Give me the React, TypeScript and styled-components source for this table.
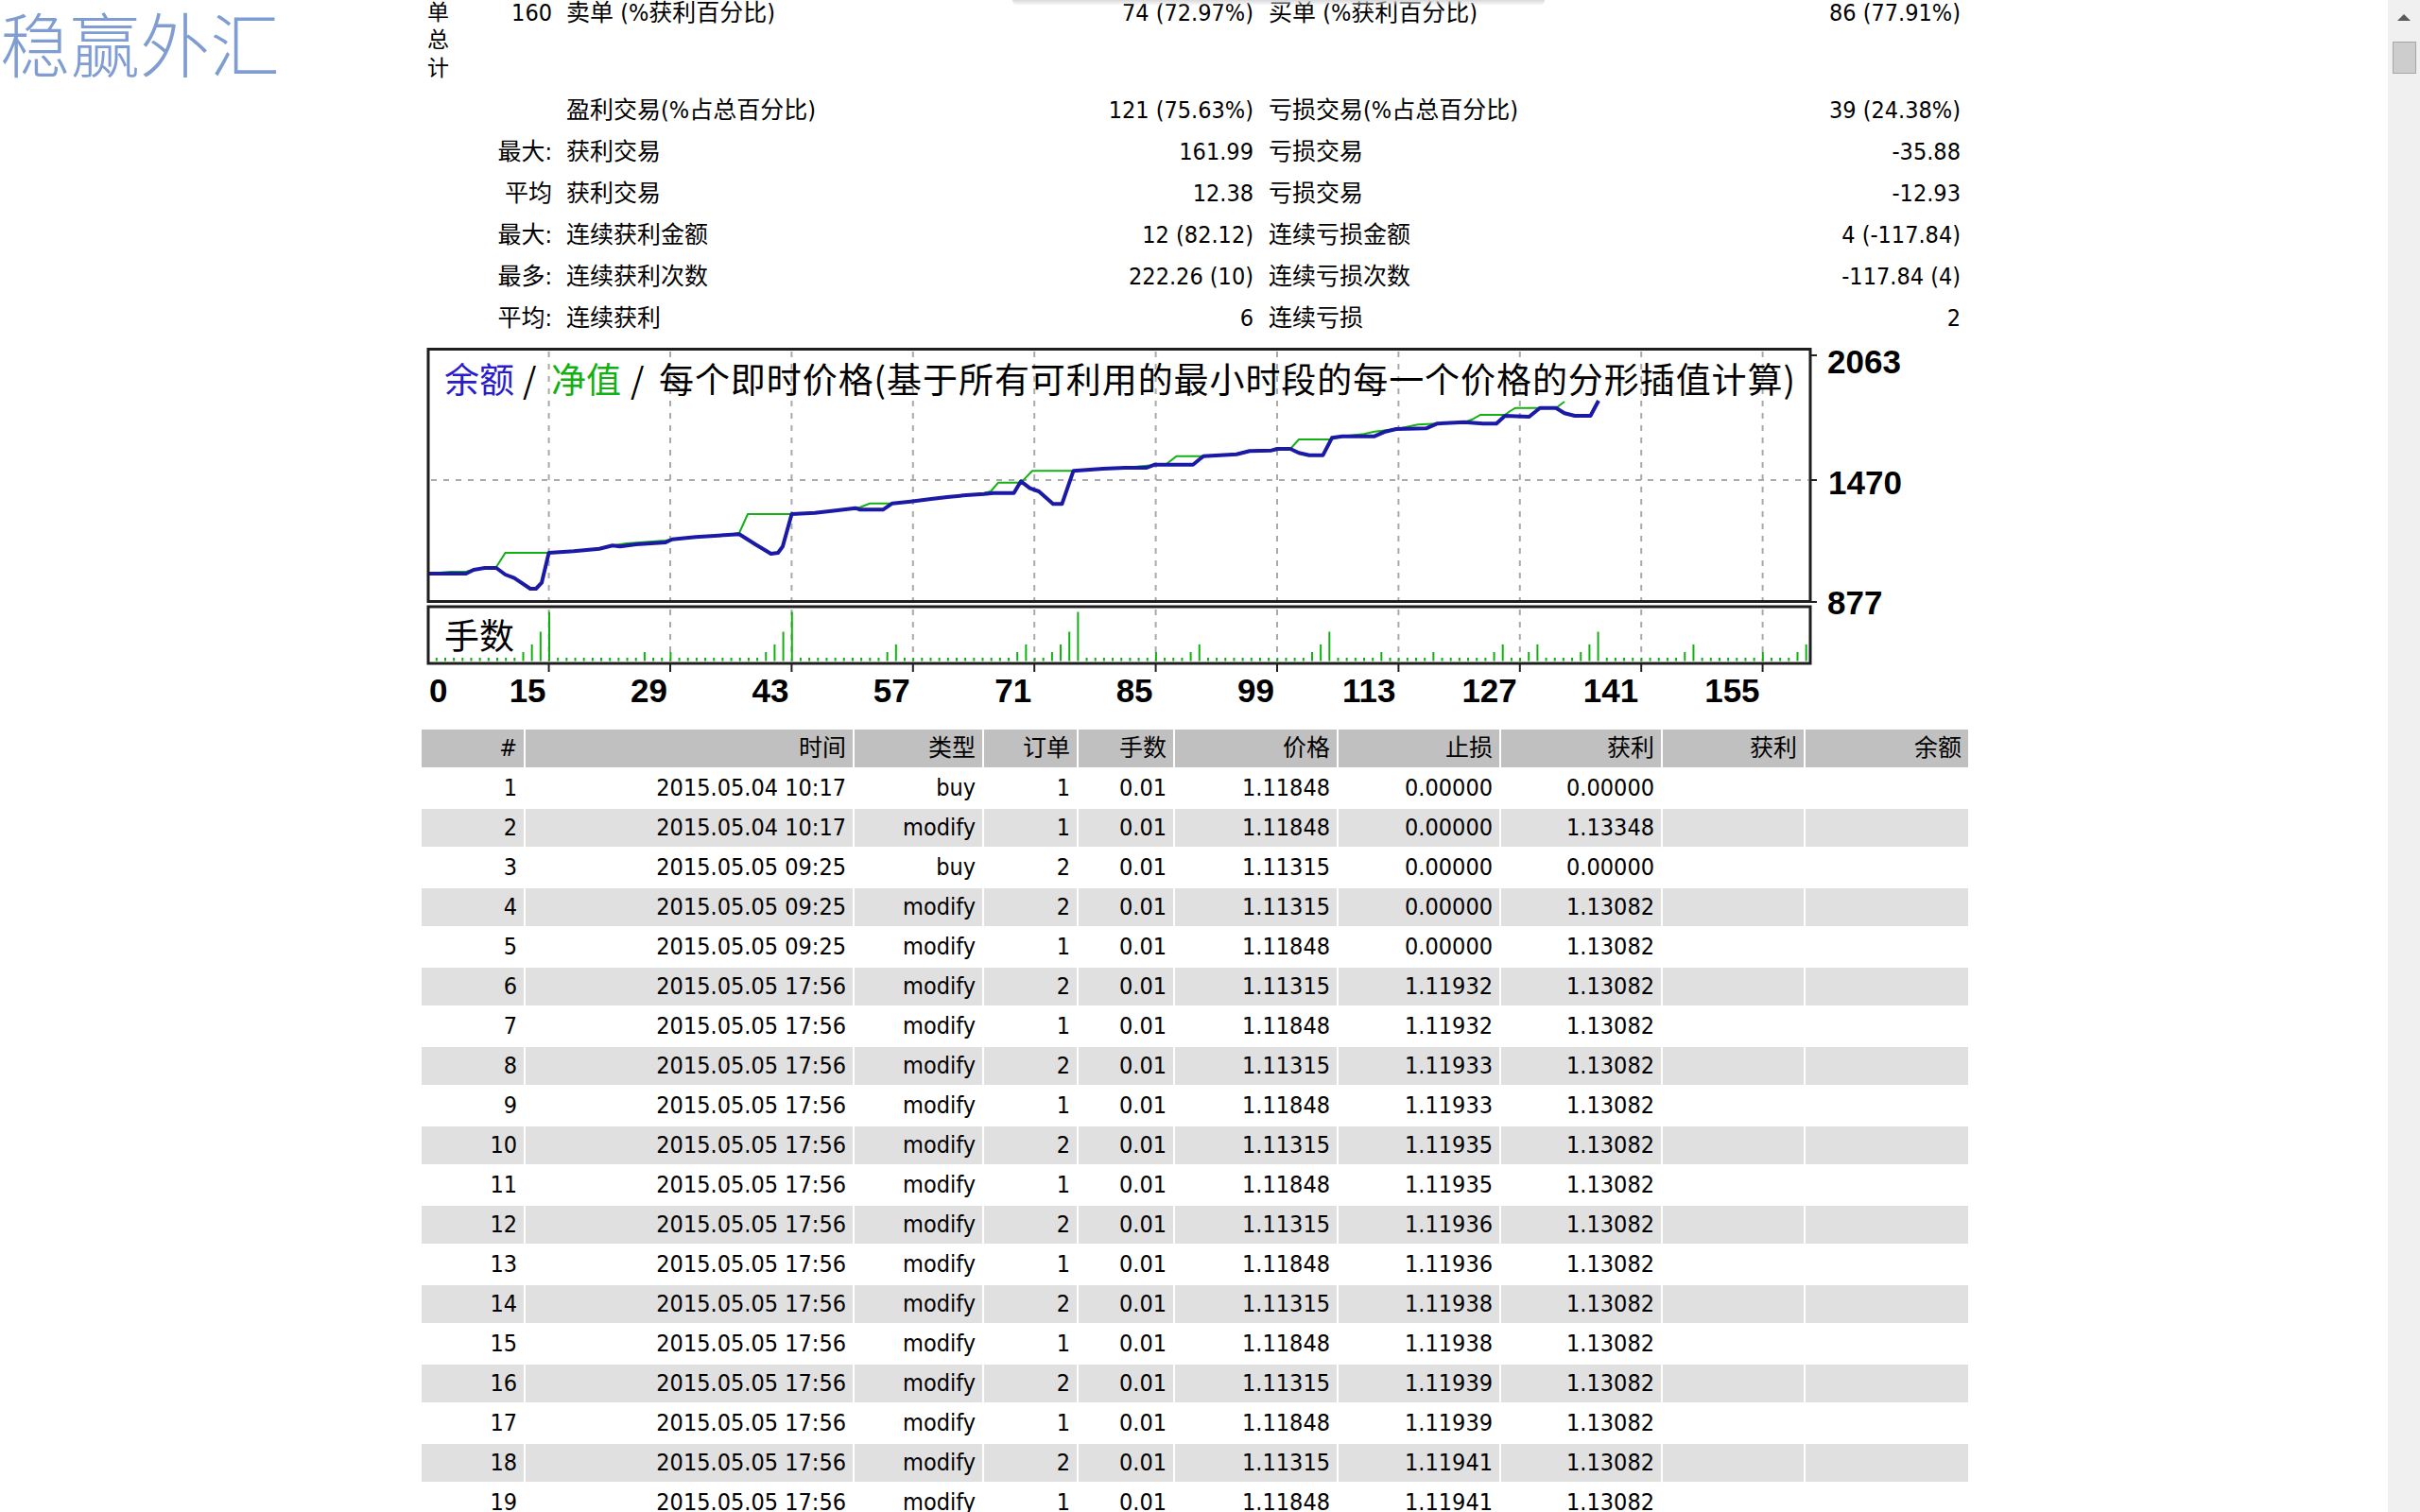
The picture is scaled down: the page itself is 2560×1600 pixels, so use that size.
import React from 'react';
import styled, { createGlobalStyle } from 'styled-components';

const FONT = `"DejaVu Sans Condensed", "Noto Sans CJK SC", sans-serif`;

const GlobalStyle = createGlobalStyle`
  html, body {
    margin: 0;
    padding: 0;
    background: #ffffff;
  }
  body {
    font-family: ${FONT};
    color: #000000;
    overflow: hidden;
  }
`;

const Viewport = styled.div`
  position: relative;
  display: flex;
  height: 100vh;
  overflow: hidden;
`;

const Page = styled.main`
  flex: 1;
  min-width: 0;
  padding-left: 444px;
  overflow: hidden;
`;

const Watermark = styled.div`
  position: absolute;
  left: 0;
  top: 0;
  font-family: "Noto Sans CJK SC", sans-serif;
  font-weight: 300;
  font-size: 74px;
  line-height: 88px;
  color: #7f9dd2;
  white-space: nowrap;
`;

const TopShadow = styled.div`
  position: absolute;
  left: 1071px;
  top: 0;
  width: 563px;
  height: 6px;
  background: linear-gradient(#d9d9d9, rgba(255, 255, 255, 0));
  border-radius: 0 0 6px 6px;
`;

/* ---------- summary block ---------- */

const StatsGrid = styled.div`
  display: grid;
  grid-template-columns: 38px 94px 415px 327px 416px 332px;
  margin: -9px 0 0 8px;
  font-size: 25px;
  line-height: 29px;
`;

const StatCell = styled.div<{ $right?: boolean; $span?: number; $indent?: number }>`
  padding: 7.5px 0 7.5px ${p => p.$indent ?? 0}px;
  text-align: ${p => (p.$right ? 'right' : 'left')};
  white-space: nowrap;
  grid-column: span ${p => p.$span ?? 1};
`;

const StackedCell = styled.div`
  padding: 7.5px 0;
  width: 24px;
  font-size: 23px;
  line-height: 29.5px;
  white-space: normal;
  word-break: break-all;
`;

/* ---------- chart ---------- */

const ChartSvg = styled.svg`
  display: block;
  margin: 1px 0 0 2px;
`;

/* ---------- trades table ---------- */

const TradesTable = styled.table`
  border-collapse: separate;
  border-spacing: 2px;
  table-layout: fixed;
  width: 1640px;
  margin-top: 10px;
  font-size: 25px;
  line-height: 30px;
`;

const HeadCell = styled.th`
  background: #c0c0c0;
  font-weight: normal;
  text-align: right;
  padding: 5px 7px 5px 0;
  white-space: nowrap;
`;

const Row = styled.tr<{ $shaded: boolean }>`
  background: ${p => (p.$shaded ? '#e0e0e0' : 'transparent')};
`;

const Cell = styled.td`
  text-align: right;
  padding: 5px 7px 5px 0;
  white-space: nowrap;
`;

/* ---------- fake scrollbar ---------- */

const ScrollTrack = styled.div`
  flex: none;
  width: 34px;
  background: #f0f0f0;
  display: flex;
  flex-direction: column;
  align-items: center;
`;

const ScrollArrow = styled.div`
  height: 36px;
  width: 100%;
  display: flex;
  align-items: center;
  justify-content: center;

  &::before {
    content: '';
    border-left: 7px solid transparent;
    border-right: 7px solid transparent;
    border-bottom: 7px solid #5a5a5a;
  }
`;

const ScrollThumb = styled.div`
  box-sizing: border-box;
  width: 25px;
  height: 34px;
  margin-top: 8px;
  background: #cdcdcd;
  border: 1px solid #a6a6a6;
`;

type StatRow = [string, string, string, string, string];

const stats: StatRow[] = [
  ['', '盈利交易(%占总百分比)', '121 (75.63%)', '亏损交易(%占总百分比)', '39 (24.38%)'],
  ['最大:', '获利交易', '161.99', '亏损交易', '-35.88'],
  ['平均', '获利交易', '12.38', '亏损交易', '-12.93'],
  ['最大:', '连续获利金额', '12 (82.12)', '连续亏损金额', '4 (-117.84)'],
  ['最多:', '连续获利次数', '222.26 (10)', '连续亏损次数', '-117.84 (4)'],
  ['平均:', '连续获利', '6', '连续亏损', '2'],
];

const columns = [
  { title: '#', width: 108 },
  { title: '时间', width: 346 },
  { title: '类型', width: 135 },
  { title: '订单', width: 98 },
  { title: '手数', width: 100 },
  { title: '价格', width: 171 },
  { title: '止损', width: 170 },
  { title: '获利', width: 169 },
  { title: '获利', width: 149 },
  { title: '余额', width: 172 },
];

const trades: string[][] = [
  ['1', '2015.05.04 10:17', 'buy', '1', '0.01', '1.11848', '0.00000', '0.00000'],
  ['2', '2015.05.04 10:17', 'modify', '1', '0.01', '1.11848', '0.00000', '1.13348'],
  ['3', '2015.05.05 09:25', 'buy', '2', '0.01', '1.11315', '0.00000', '0.00000'],
  ['4', '2015.05.05 09:25', 'modify', '2', '0.01', '1.11315', '0.00000', '1.13082'],
  ['5', '2015.05.05 09:25', 'modify', '1', '0.01', '1.11848', '0.00000', '1.13082'],
];

const stops = ['1.11932', '1.11932', '1.11933', '1.11933', '1.11935', '1.11935', '1.11936', '1.11936',
  '1.11938', '1.11938', '1.11939', '1.11939', '1.11941', '1.11941'];
stops.forEach((sl, i) => {
  const even = i % 2 === 0;
  trades.push([
    String(i + 6),
    '2015.05.05 17:56',
    'modify',
    even ? '2' : '1',
    '0.01',
    even ? '1.11315' : '1.11848',
    sl,
    '1.13082',
  ]);
});

// chart geometry, in page pixels
const BOX_LEFT = 453;
const BOX_RIGHT = 1915;
const TICKS = [15, 29, 43, 57, 71, 85, 99, 113, 127, 141, 155].map((label, k) => ({
  label,
  x: 580.6 + k * 128.4,
}));

const balance = [
  [454, 607], [493, 607], [501, 603], [513, 601], [525, 601], [534.5, 608], [544, 611.7],
  [561, 623], [567, 623], [573, 616.7], [580.6, 585], [607, 583.3], [634, 580.7], [648, 577.3],
  [656, 578.3], [673, 576], [704, 574], [711, 570.7], [736, 568.3], [770, 566], [782, 565.3],
  [799, 576], [815.6, 586], [823, 585], [828, 578.3], [837.5, 544], [862, 542.7], [886, 540],
  [905, 537.7], [910, 539.3], [934, 539.3], [944, 532.7], [963.5, 530.7], [983, 528.3],
  [1002, 526], [1022, 524], [1041, 522.7], [1051, 521.7], [1072.5, 521.7], [1080, 509.3],
  [1089.5, 516.7], [1099, 520], [1114, 533.3], [1123.4, 533.3], [1135.5, 498.3], [1167, 496],
  [1190, 495], [1213, 495], [1221.6, 491.7], [1262, 491.7], [1273, 482.7], [1308, 480.7],
  [1322, 477.3], [1345, 476.7], [1351, 475], [1365, 475], [1374, 479.3], [1385, 481.7],
  [1399.5, 481.7], [1409, 463.3], [1420, 461.7], [1454, 461.7], [1465.5, 456.7], [1477, 454],
  [1508.6, 453.3], [1520, 448.3], [1549, 446.7], [1569, 448.3], [1583, 448.3], [1592, 440],
  [1617.6, 441], [1629, 431.7], [1646, 431.7], [1655, 437.3], [1666, 440], [1682.5, 440],
  [1691, 424],
];

const equity = [
  [454, 607], [476, 605], [493, 605], [500, 603], [513, 601], [525, 600], [534.5, 585],
  [580.6, 585], [607, 583.3], [634, 580.7], [648, 577.3], [656, 576], [663, 575], [687, 573.3],
  [704, 572], [711, 570.7], [736, 568.3], [770, 566], [782, 564], [791, 544], [837.5, 544],
  [862, 542.7], [886, 540], [905, 537.7], [910, 536.7], [920, 532.7], [944, 532.7],
  [963.5, 530.7], [983, 528.3], [1002, 526], [1022, 524], [1041, 521.7], [1048, 520],
  [1056, 510.7], [1080, 510.7], [1092, 498.3], [1135.5, 498.3], [1167, 496], [1190, 495],
  [1213, 492.7], [1233, 491.7], [1244.5, 482.7], [1273, 482.7], [1308, 480.7], [1322, 477.3],
  [1345, 476.7], [1365, 475], [1374, 465], [1408, 465], [1420, 461.7], [1443, 459.3],
  [1454, 456.7], [1477, 454], [1500, 449.3], [1520, 448.3], [1549, 446.7], [1557, 444],
  [1566, 439], [1592, 439], [1597.5, 435], [1603, 431.7], [1629, 431.7], [1646, 431.7],
  [1655, 425],
];

// lot bars: index -> height above the baseline
const tallBars: Record<number, number> = {
  10: 9.5, 11: 17.6, 12: 31, 13: 52, 24: 9.5, 27: 9.5, 38: 9.5, 39: 17.6, 40: 31, 41: 52,
  52: 9.5, 53: 17.6, 67: 9.5, 68: 17.6, 71: 9.5, 72: 17.6, 73: 31, 74: 52, 83: 9.5, 87: 9.5,
  88: 17.6, 101: 9.5, 102: 17.6, 103: 31, 109: 9.5, 115: 9.5, 122: 9.5, 123: 17.6, 126: 9.5,
  127: 17.6, 132: 9.5, 133: 17.6, 134: 31, 144: 9.5, 145: 17.6, 153: 9.5, 157: 9.5, 158: 17.6,
};
const bars = Array.from({ length: 159 }, (_, k) => ({
  x: 461.8 + k * 9.17,
  h: tallBars[k] ?? 3.5,
}));

const toPoints = (pts: number[][]) => pts.map(([x, y]) => `${x},${y}`).join(' ');

const BalanceChart: React.FC = () => (
  <ChartSvg width={1600} height={400} viewBox="446 360 1600 400">
    {/* grid */}
    <g stroke="#a9a9a9" strokeWidth={2} strokeDasharray="6 7">
      {TICKS.map(t => (
        <line key={t.label} x1={t.x} y1={372} x2={t.x} y2={700} />
      ))}
      <line x1={456} y1={508} x2={1913} y2={508} />
    </g>

    {/* axis ticks */}
    <g stroke="#202020" strokeWidth={2}>
      {TICKS.map(t => (
        <line key={t.label} x1={t.x} y1={703} x2={t.x} y2={711} />
      ))}
      <line x1={1916} y1={376} x2={1922} y2={376} />
      <line x1={1916} y1={508} x2={1922} y2={508} />
      <line x1={1916} y1={637} x2={1922} y2={637} />
    </g>

    {/* lot bars */}
    <g stroke="#10b010" strokeWidth={2}>
      {bars.map(b => (
        <line key={b.x} x1={b.x} y1={699.5} x2={b.x} y2={699.5 - b.h} />
      ))}
    </g>

    {/* curves */}
    <polyline points={toPoints(equity)} fill="none" stroke="#12b012" strokeWidth={2} />
    <polyline
      points={toPoints(balance)}
      fill="none"
      stroke="#1a1aa6"
      strokeWidth={4}
      strokeLinejoin="round"
    />

    {/* frames */}
    <rect x={BOX_LEFT} y={369.5} width={BOX_RIGHT - BOX_LEFT} height={267} fill="none" stroke="#1e1e1e" strokeWidth={3} />
    <rect x={BOX_LEFT} y={642} width={BOX_RIGHT - BOX_LEFT} height={60} fill="none" stroke="#1e1e1e" strokeWidth={3} />

    {/* title */}
    <g fontFamily='"Noto Sans CJK SC", sans-serif' fontSize={37}>
      <text x={470} y={416} fill="#2a1ccc">余额</text>
      <text x={553} y={416} fill="#000">/</text>
      <text x={583} y={416} fill="#12b012">净值</text>
      <text x={667} y={416} fill="#000">/</text>
      <text x={697} y={416} fill="#000" textLength={1202} lengthAdjust="spacing">
        每个即时价格(基于所有可利用的最小时段的每一个价格的分形插值计算)
      </text>
      <text x={470} y={687} fill="#000">手数</text>
    </g>

    {/* axis labels */}
    <g fontFamily='"Liberation Sans", Arial, sans-serif' fontWeight={700} fontSize={35} fill="#000">
      <text x={1933} y={395}>2063</text>
      <text x={1934} y={523}>1470</text>
      <text x={1933} y={650}>877</text>
      <text x={454} y={743}>0</text>
      {TICKS.map(t => (
        <text key={t.label} x={t.x - 3} y={743} textAnchor="end">
          {t.label}
        </text>
      ))}
    </g>
  </ChartSvg>
);

export default function App() {
  return (
    <>
      <GlobalStyle />
      <Viewport>
        <Page>
          <StatsGrid>
            <StackedCell>单总计</StackedCell>
            <StatCell $right>160</StatCell>
            <StatCell $indent={15}>卖单 (%获利百分比)</StatCell>
            <StatCell $right>74 (72.97%)</StatCell>
            <StatCell $indent={16}>买单 (%获利百分比)</StatCell>
            <StatCell $right>86 (77.91%)</StatCell>
            {stats.map((r, i) => (
              <React.Fragment key={i}>
                <StatCell $right $span={2}>{r[0]}</StatCell>
                <StatCell $indent={15}>{r[1]}</StatCell>
                <StatCell $right>{r[2]}</StatCell>
                <StatCell $indent={16}>{r[3]}</StatCell>
                <StatCell $right>{r[4]}</StatCell>
              </React.Fragment>
            ))}
          </StatsGrid>

          <BalanceChart />

          <TradesTable>
            <colgroup>
              {columns.map((c, i) => (
                <col key={i} style={{ width: c.width }} />
              ))}
            </colgroup>
            <thead>
              <tr>
                {columns.map((c, i) => (
                  <HeadCell key={i}>{c.title}</HeadCell>
                ))}
              </tr>
            </thead>
            <tbody>
              {trades.map((t, i) => (
                <Row key={t[0]} $shaded={i % 2 === 1}>
                  {t.map((v, j) => (
                    <Cell key={j}>{v}</Cell>
                  ))}
                  <Cell />
                  <Cell />
                </Row>
              ))}
            </tbody>
          </TradesTable>
        </Page>

        <ScrollTrack>
          <ScrollArrow />
          <ScrollThumb />
        </ScrollTrack>

        <Watermark>稳赢外汇</Watermark>
        <TopShadow />
      </Viewport>
    </>
  );
}
